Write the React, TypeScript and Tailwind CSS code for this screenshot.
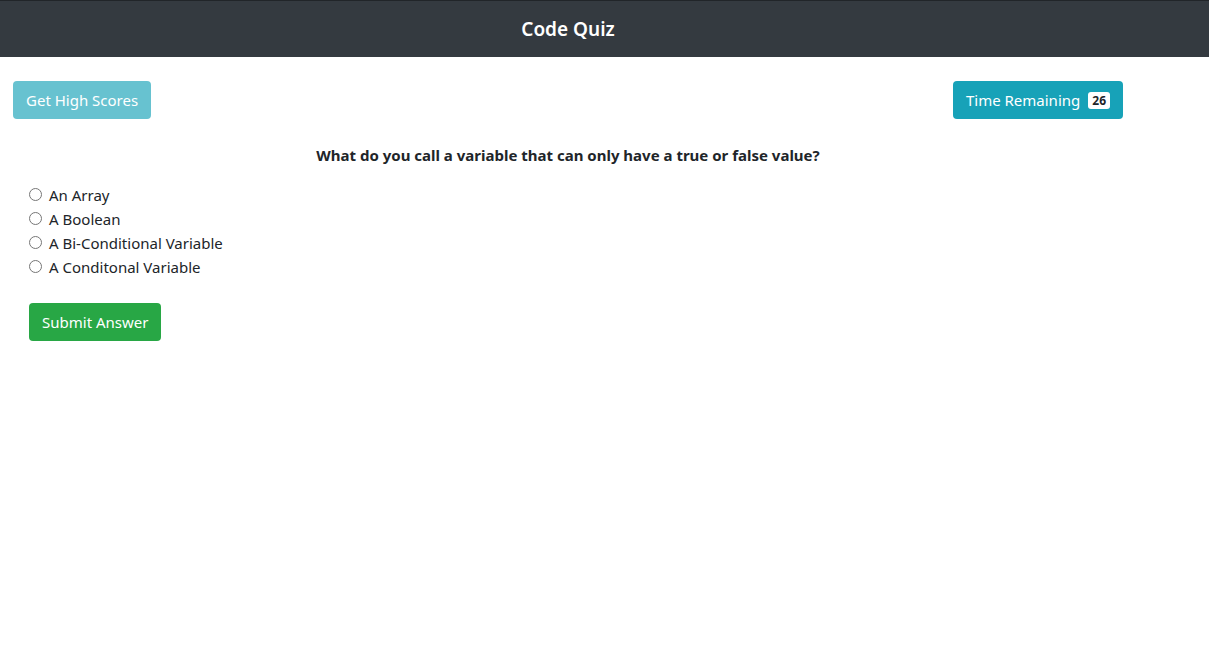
import React, { useState } from "react";

const answers = ["An Array", "A Boolean", "A Bi-Conditional Variable", "A Conditonal Variable"];

export default function App() {
  const [picked, setPicked] = useState<string | null>(null);

  return (
    <div className="min-h-screen bg-white font-['Noto_Sans',sans-serif] text-[#212529]">
      {/* Header */}
      <header className="h-[57px] border-t border-[#212529] bg-[#343a40]">
        <div className="w-[1136px] h-full flex items-center justify-center">
          <h1 className="text-[19px] font-semibold text-white">Code Quiz</h1>
        </div>
      </header>

      <div className="w-[1136px]">
        {/* Top buttons */}
        <div className="flex justify-between px-[13px] mt-6">
          <button className="h-[38px] px-[13px] rounded bg-[#17a2b8] opacity-65 text-white text-[15px]">
            Get High Scores
          </button>
          <button className="h-[38px] px-[13px] rounded bg-[#17a2b8] text-white text-[15px] flex items-center gap-2">
            Time Remaining
            <span className="bg-white text-[#212529] text-[12px] font-bold rounded-[3px] px-1 leading-[17px]">26</span>
          </button>
        </div>

        {/* Question */}
        <div className="px-[29px] mt-[24px]">
          <h2 className="text-center text-[15px] font-bold leading-6">
            What do you call a variable that can only have a true or false value?
          </h2>
          <div className="mt-4 flex flex-col">
            {answers.map((a) => (
              <label key={a} className="flex items-center gap-[7px] text-[15px] leading-6 h-6">
                <input
                  type="radio"
                  name="answer"
                  checked={picked === a}
                  onChange={() => setPicked(a)}
                  className="w-[13px] h-[13px] m-0 -mt-[2px]"
                />
                {a}
              </label>
            ))}
          </div>
          <button className="mt-6 h-[38px] px-[13px] rounded bg-[#28a745] text-white text-[15px]">
            Submit Answer
          </button>
        </div>
      </div>
    </div>
  );
}
